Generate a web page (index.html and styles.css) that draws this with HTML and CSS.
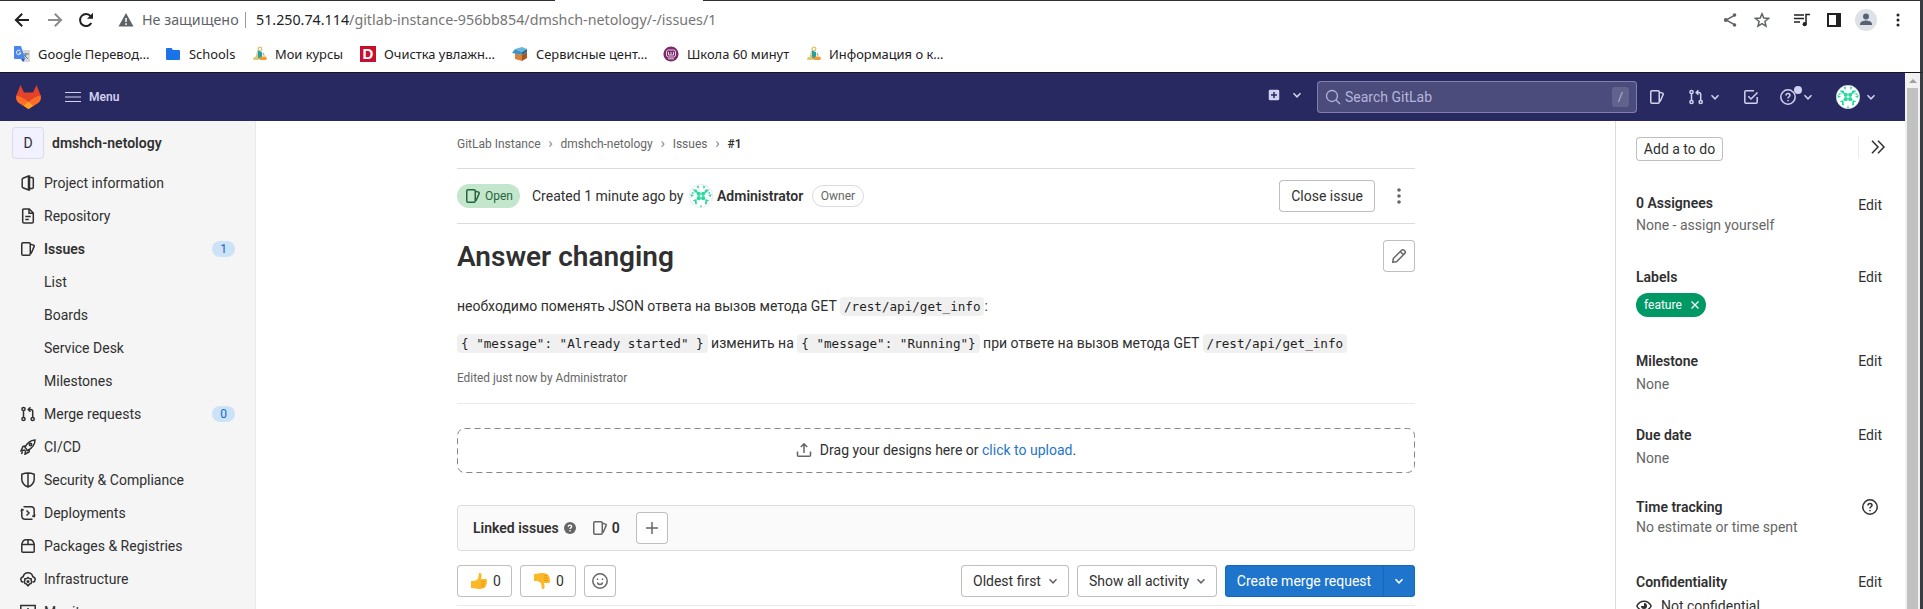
FILE: index.html
```html
<!DOCTYPE html>
<html lang="en">
<head>
<meta charset="utf-8">
<title>Answer changing (#1) · Issues</title>
<link rel="stylesheet" href="styles.css">
</head>
<body>
<svg class="sprite" aria-hidden="true">
  <symbol id="issues" viewBox="0 0 16 16"><rect x="1.75" y="1.75" width="8.5" height="12.5" rx="1.2"/><path d="M10.500 3.200l3 .9c.6.200.9.700.7 1.300l-3.200 7.400"/></symbol>
  <symbol id="merge" viewBox="0 0 16 16"><circle cx="3.5" cy="3" r="1.6"/><circle cx="3.5" cy="13" r="1.6"/><circle cx="12.7" cy="13" r="1.6"/><path d="M3.500 4.600v6.800M12.700 11.400V5.500c0-1.200-.8-2-2-2H8.500M10.400 1.300L8.200 3.500l2.200 2.200"/></symbol>
  <symbol id="chevron" viewBox="0 0 16 16"><path d="M4.500 6.200L8 9.800l3.500-3.600"/></symbol>
  <symbol id="question" viewBox="0 0 16 16"><circle cx="8" cy="8" r="7.2"/><path d="M6 6.500c0-1.200.9-2 2-2s2 .7 2 1.800c0 1.400-2 1.500-2 3.100"/><path d="M8 10.900v1.400"/></symbol>
  <symbol id="identicon" viewBox="0 0 24 24"><circle cx="12" cy="12" r="11.7" fill="#fff" stroke="#dcdcdc" stroke-width=".6"/><g fill="#2bd9a0" stroke="none"><circle cx="9.800" cy="9.800" r="2.100"/><circle cx="14.200" cy="9.800" r="2.100"/><circle cx="9.800" cy="14.200" r="2.100"/><circle cx="14.200" cy="14.200" r="2.100"/><path d="M3.500 5.500h4l1.500 3-2 .5zM20.500 5.500h-4l-1.500 3 2 .5zM3.500 16.500l4-1.500.5 5.500-2-.5V17.500zM20.500 16.500l-4-1.500-.5 5.500 2-.5V17.500zM7.500 2.500l2.500-1-.5 3.500zM16.500 2.500l-2.500-1 .5 3.500zM1.500 10l3.500 1.500-3 1.500zM22.500 10L19 11.500l3 1.500zM11 23l1-2.500 1 2.500zM3 8l3 1-3.500 1zM21 8l-3 1 3.500 1z"/></g></symbol>
  <symbol id="courses" viewBox="0 0 16 16"><circle cx="8" cy="3" r="1.800" fill="none" stroke="#d9c36b" stroke-width="1.300"/><path d="M5.500 4.500L10 6v7H6z" fill="#23a0a5"/><path d="M1 13.500c0-2 1-2.500 2.500-2.500L5 6l1.500 6v2H2z" fill="#e3c675"/><path d="M7 12l3-1.500h3.500c1.500 0 1.500 3 .5 3.500H8z" fill="#f29c2e"/><path d="M11 6l2 3.500h-2.500z" fill="#a8b58a"/></symbol>
</svg>

<div class="browser">
  <div class="tabstrip"><i></i><i></i></div>
  <div class="toolbar">
    <svg class="ico t-back" viewBox="0 0 16 16"><path d="M15 8H2M8.200 1.700L1.900 8l6.300 6.300"/></svg>
    <svg class="ico t-fwd" viewBox="0 0 16 16"><path d="M1 8h13M7.800 1.700L14.100 8l-6.300 6.300"/></svg>
    <svg class="ico t-load" viewBox="0 0 16 16"><path d="M13.300 11A6 6 0 1 1 12.700 4.200"/><path class="solid" d="M15 .8v6H9z"/></svg>
    <svg class="t-warn" viewBox="0 0 16 14"><path d="M8 0l7.500 13.500H.5z" fill="#5f6368"/><path d="M8 5v4M8 10.300v1.700" stroke="#fff" stroke-width="1.500"/></svg>
    <span class="unsafe">Не защищено</span><span class="bar"></span>
    <span class="url"><b>51.250.74.114</b>/gitlab-instance-956bb854/dmshch-netology/-/issues/1</span>
    <div class="tools">
      <svg class="ico" viewBox="0 0 16 16"><path d="M12.500 3.300L4 8l8.500 4.700"/><g class="solid"><circle cx="12.500" cy="3" r="1.800"/><circle cx="3.700" cy="8" r="1.900"/><circle cx="12.500" cy="13" r="1.800"/></g></svg>
      <svg class="ico" viewBox="0 0 16 16"><path d="M8 1.800l1.800 4.300 4.700.4-3.600 3 1.100 4.600L8 11.700l-4 2.400 1.100-4.600-3.600-3 4.700-.4z"/></svg>
      <svg class="ico dark" viewBox="0 0 16 16"><path d="M0 3h10M0 6.500h10M0 10h6M12 12V2.500h4"/><circle class="solid" cx="10.700" cy="12.200" r="2.100"/></svg>
      <svg class="dark panel" viewBox="0 0 14 14"><path d="M1 1h12v12H1z" fill="#fff" stroke="#222" stroke-width="2"/><path d="M9 1h4v12H9z" fill="#222"/></svg>
      <svg class="person" viewBox="0 0 22 22"><circle cx="11" cy="11" r="11" fill="#dee1e6"/><circle cx="11" cy="7.500" r="3" fill="#566176"/><path d="M5 16v-1c0-2.500 4-3.500 6-3.500s6 1 6 3.500v1z" fill="#566176"/></svg>
      <svg class="kebab" viewBox="0 0 16 16"><circle cx="8" cy="3" r="1.500"/><circle cx="8" cy="8" r="1.500"/><circle cx="8" cy="13" r="1.500"/></svg>
    </div>
  </div>
  <div class="bookmarks">
    <span><svg viewBox="0 0 16 16"><path d="M7 4h9v12H9z" fill="#d8d8d8"/><path d="M9 8h6M12 7v1c0 3-2 4-3 5M10 9l4 4" stroke="#607d8b" fill="none"/><path d="M0 1a1 1 0 0 1 1-1h6l4 13H1a1 1 0 0 1-1-1z" fill="#4a86ee"/><path d="M7 13h4l-2 3z" fill="#2a56c6"/><path d="M6.500 5.200A2.200 2.200 0 1 0 6.800 7H4.800" stroke="#fff" fill="none"/></svg>Google Перевод…</span>
    <span><svg viewBox="0 0 16 16"><path d="M0 3a1 1 0 0 1 1-1h4.500L7 4h6a1 1 0 0 1 1 1v8a1 1 0 0 1-1 1H1a1 1 0 0 1-1-1z" fill="#1a73e8"/></svg>Schools</span>
    <span><svg viewBox="0 0 16 16"><use href="#courses"/></svg>Мои курсы</span>
    <span><i class="d-logo">D</i>Очистка увлажн…</span>
    <span><svg viewBox="0 0 16 16"><path d="M3 7l7 2v6l-7-2z" fill="#d9803b"/><path d="M10 9l5-3v6l-5 3z" fill="#a9561d"/><path d="M3 3l7-2 5 2-5 3z" fill="#67b6dd"/><path d="M3 3l7 3v3L0 7z" fill="#3c94c6"/><path d="M10 6l5-3v3l-5 3z" fill="#25698f"/></svg>Сервисные цент…</span>
    <span><svg viewBox="0 0 16 16"><circle cx="8" cy="8" r="7.600" fill="#7d2a6a"/><rect x="3.500" y="4" width="9" height="7" rx="2" fill="none" stroke="#e6cfe1"/><path d="M5.500 6v3h5V6M8 6v3M5 12.800h6" fill="none" stroke="#e6cfe1"/></svg>Школа 60 минут</span>
    <span><svg viewBox="0 0 16 16"><use href="#courses"/></svg>Информация о к…</span>
  </div>
</div>

<div class="viewport">
  <div class="app">
    <header class="navbar">
      <svg class="logo" viewBox="0 0 25 24"><path d="M4.500 0L8 7.500h9L20.500 0l4.200 10.500c.6 3.500-.7 6-2.700 7.500L12.500 24 3 18C1 16.500-.3 14 .3 10.500z" fill="#e24329"/><path d="M.3 10.500c3 .3 7.200 2.500 12.200 6.300 5-3.800 9.200-6 12.200-6.300.6 3.500-.7 6-2.700 7.500L12.500 24 3 18C1 16.500-.3 14 .3 10.500z" fill="#fc6d26"/><path d="M12.500 16.800l4.600 3.900-4.600 3.300-4.600-3.300z" fill="#fca326"/></svg>
      <svg class="burger" viewBox="0 0 16 12"><path d="M0 1.500h16M0 6h16M0 10.500h16"/></svg>
      <b class="menu">Menu</b>
      <div class="nav-right">
        <svg class="plus" viewBox="0 0 12 12"><rect width="12" height="12" rx="2"/><path d="M6 3v6M3 6h6"/></svg>
        <svg class="ico chev1"><use href="#chevron"/></svg>
        <div class="search"><svg class="ico" viewBox="0 0 16 16"><circle cx="7" cy="7" r="5.500"/><path d="M11 11l4 4"/></svg><span>Search GitLab</span><kbd>/</kbd></div>
        <svg class="ico n-issues"><use href="#issues"/></svg>
        <svg class="ico n-merge"><use href="#merge"/></svg>
        <svg class="ico n-ch"><use href="#chevron"/></svg>
        <svg class="ico n-todo" viewBox="0 0 16 16"><path d="M14.200 8v5c0 .7-.5 1.200-1.200 1.200H3c-.7 0-1.200-.5-1.200-1.200V3c0-.7.5-1.200 1.200-1.200h8M5.300 7.300L8 10l6.500-6.500"/></svg>
        <span class="n-help"><svg class="ico"><use href="#question"/></svg><i></i></span>
        <svg class="ico n-ch2"><use href="#chevron"/></svg>
        <svg class="avatar n-av"><use href="#identicon"/></svg>
        <svg class="ico n-ch3"><use href="#chevron"/></svg>
      </div>
    </header>
    <div class="columns">
      <nav class="side">
        <div class="project"><span class="letter">D</span><b>dmshch-netology</b></div>
        <a><svg class="ico" viewBox="0 0 16 16"><path d="M8.500 1.200v13.600M8.500 1L3 3.300c-.5.200-.8.500-.8 1v7.400c0 .5.300.8.8 1L8.500 15h1V1zM9.500 2.500H12c.8 0 1.300.4 1.300 1.200v8.600c0 .8-.5 1.200-1.300 1.200H9.500"/></svg>Project information</a>
        <a><svg class="ico" viewBox="0 0 16 16"><path d="M3.700.9h5.600L13.300 5v8.800c0 .8-.5 1.300-1.300 1.300H4c-.8 0-1.300-.5-1.300-1.300V2.200C2.700 1.400 3 .9 3.700.9zM9 1v4.300h4.200M5.300 8.500h5.400M5.300 11.500h3.500"/></svg>Repository</a>
        <a class="active"><svg class="ico"><use href="#issues"/></svg>Issues<em>1</em></a>
        <a class="sub">List</a>
        <a class="sub">Boards</a>
        <a class="sub">Service Desk</a>
        <a class="sub">Milestones</a>
        <a><svg class="ico"><use href="#merge"/></svg>Merge requests<em>0</em></a>
        <a><svg class="ico" viewBox="0 0 16 16"><path d="M5 8.500C7 4 10 1.300 15 1c0 4.500-2.500 8-7.500 10.500zM6 6.800L3 7.500l-2 4.300 4-.8M9.500 10.200L9 13l-4 2.200.7-4M2.500 12.500L1.500 15"/><circle cx="10.500" cy="5.500" r="1.200"/></svg>CI/CD</a>
        <a><svg class="ico" viewBox="0 0 16 16"><path d="M8 1c-2 0-4 .4-6.200 1.200v5c0 3.500 2 6 6.200 7.800 4.200-1.800 6.200-4.300 6.200-7.800v-5C12 1.400 10 1 8 1zM8 1v14"/></svg>Security &amp; Compliance</a>
        <a><svg class="ico" viewBox="0 0 16 16"><path d="M3.500 1.800H11c2 0 3.200 1.200 3.200 3.200v6.500M12.500 14.200H5c-2 0-3.200-1.200-3.200-3.200V4.500M1 6.500l.8-2 2 .5M15 9.500l-.8 2-2-.5M6.500 5.500L9 8l-2.500 2.500"/></svg>Deployments</a>
        <a><svg class="ico" viewBox="0 0 16 16"><path d="M1.800 6.500v6.700c0 .6.400 1 1 1h10.400c.6 0 1-.4 1-1V6.500zM1.800 6.500c.6-3 2-4.700 4.200-4.700h4c2.200 0 3.600 1.700 4.200 4.700M8 2v4.500"/></svg>Packages &amp; Registries</a>
        <a><svg class="ico" viewBox="0 0 16 16"><path d="M3 11.200C1.700 10.800.8 9.800.8 8.500c0-1.500 1-2.500 2.400-2.800C3.700 3.300 5.500 1.700 8 1.700s4.300 1.600 4.800 4c1.400.3 2.400 1.300 2.400 2.800 0 1.300-.9 2.300-2.200 2.700M8 6.500l1.300 1 1.800.2.100 1.900.7 1.400-1 1.500-1.300.4L8 14.800l-1.600-1.900-1.300-.4-1-1.500.7-1.400.1-1.900 1.800-.2z"/><circle cx="8" cy="10.500" r=".8"/></svg>Infrastructure</a>
        <a><svg class="ico" viewBox="0 0 16 16"><path d="M.8 1.500h14.400v10H.8zM5 15h6M8 4v4"/></svg>Monitor</a>
      </nav>
      <main>
        <div class="crumbs">GitLab Instance<i>›</i>dmshch-netology<i>›</i>Issues<i>›</i><b>#1</b></div>
        <div class="status">
          <span class="open"><svg class="ico"><use href="#issues"/></svg>Open</span>
          <span class="created">Created 1 minute ago by</span>
          <svg class="avatar"><use href="#identicon"/></svg>
          <b>Administrator</b><span class="owner">Owner</span>
          <button class="close">Close issue</button>
          <svg class="kebab" viewBox="0 0 16 16"><circle cx="8" cy="2" r="1.800"/><circle cx="8" cy="8" r="1.800"/><circle cx="8" cy="14" r="1.800"/></svg>
        </div>
        <div class="title"><h1>Answer changing</h1><button class="sq"><svg class="ico" viewBox="0 0 16 16"><path d="M1.800 14.200l.5-3.700 8.300-8.300c.7-.7 1.700-.7 2.400 0l.8.8c.7.7.7 1.700 0 2.400l-8.300 8.300zM9.300 3.500l3.200 3.200"/></svg></button></div>
        <p>необходимо поменять JSON ответа на вызов метода GET <code>/rest/api/get_info</code>:</p>
        <p><code>{ "message": "Already started" }</code> изменить на <code>{ "message": "Running"}</code> при ответе на вызов метода GET <code>/rest/api/get_info</code></p>
        <div class="edited">Edited just now by Administrator</div>
        <div class="drop">
          <svg class="dash"><rect x=".5" y=".5" width="957" height="44" rx="7"/></svg>
          <svg class="ico" viewBox="0 0 16 16"><path d="M1.500 9.500v3.700c0 .6.400 1 1 1h11c.6 0 1-.4 1-1V9.500M8 11V2M4.800 5L8 1.800 11.200 5"/></svg><span>Drag your designs here or <a>click to upload</a>.</span>
        </div>
        <div class="linked"><b>Linked issues</b><svg class="help" viewBox="0 0 12 12"><circle cx="6" cy="6" r="6" fill="#666"/><path d="M4.300 4.800c0-1 .7-1.700 1.700-1.700s1.700.6 1.700 1.400C7.700 5.600 6 5.700 6 7M6 8v1.400" fill="none" stroke="#fff" stroke-width="1.300"/></svg><svg class="ico"><use href="#issues"/></svg><b>0</b><button class="sq"><svg class="ico" viewBox="0 0 16 16"><path d="M8 2v12M2 8h12"/></svg></button></div>
        <div class="actions">
          <button class="up"><svg viewBox="0 0 18 18"><path d="M8 7l1-6c2-.5 3 1 2.500 3L11 7h4.500c1.800 0 2 2 1 2.500 1 .7.700 2-.300 2.400.6.900.1 2-.9 2.200.3 1.200-.5 1.900-1.500 1.900C11 17.500 7 17 5.500 16.500L1 16V9h3.500z" fill="#fcb826"/><path d="M11 9.500h4M11 12h4M11 14.300h3" stroke="#e08a12" stroke-width=".7"/></svg>0</button>
          <button class="down"><svg viewBox="0 0 18 18"><g transform="matrix(1 0 0 -1 0 18)"><path d="M10 7L9 1C7 .5 6 2 6.500 4L7 7H2.500c-1.800 0-2 2-1 2.500-1 .7-.7 2 .3 2.400-.6.900-.1 2 .9 2.200-.3 1.200.5 1.900 1.500 1.900 2.800 1.500 6.800 1 8.300.5L17 16V9h-3.500z" transform="matrix(-1 0 0 1 18 0)" fill="#fcb826"/><path d="M11 9.500h4M11 12h4M11 14.300h3" stroke="#e08a12" stroke-width=".7"/></g></svg>0</button>
          <button class="sq"><svg class="ico" viewBox="0 0 16 16"><circle cx="8" cy="8" r="7.200"/><path d="M5.500 5.500v1.500M10.500 5.500v1.500M5.300 9.500c.5 1.500 1.500 2 2.700 2s2.200-.5 2.700-2"/></svg></button>
          <button class="sort">Oldest first<svg class="ico"><use href="#chevron"/></svg></button>
          <button class="show">Show all activity<svg class="ico"><use href="#chevron"/></svg></button>
          <div class="create"><span>Create merge request</span><i><svg class="ico"><use href="#chevron"/></svg></i></div>
        </div>
      </main>
      <aside>
        <div class="todo"><button>Add a to do</button><span><svg class="ico" viewBox="0 0 16 16"><path d="M2 1.800L8 8l-6 6.200M8 1.800L14 8l-6 6.200"/></svg></span></div>
        <section class="s1"><b>0 Assignees</b><a>Edit</a><p>None - assign yourself</p></section>
        <section class="s2"><b>Labels</b><a>Edit</a><p><span class="label">feature<svg viewBox="0 0 8 8"><path d="M.5.5l7 7M7.500.5l-7 7"/></svg></span></p></section>
        <section class="s3"><b>Milestone</b><a>Edit</a><p>None</p></section>
        <section class="s4"><b>Due date</b><a>Edit</a><p>None</p></section>
        <section class="s5"><b>Time tracking</b><a class="q"><svg class="ico"><use href="#question"/></svg></a><p>No estimate or time spent</p></section>
        <section class="s6"><b>Confidentiality</b><a>Edit</a><p><svg class="ico" viewBox="0 0 16 16"><path d="M.8 8C2.500 5 5 3.300 8 3.300S13.500 5 15.200 8C13.500 11 11 12.700 8 12.700S2.500 11 .8 8z"/><path class="solid" d="M8 5a3 3 0 1 1-3 3h3z"/></svg>Not confidential</p></section>
      </aside>
    </div>
  </div>
  <div class="scroll"><i></i><b></b></div>
  <div class="edge"></div>
</div>
</body>
</html>
```
FILE: styles.css
```css
* { box-sizing: border-box; }
body { margin: 0; width: 1923px; height: 609px; overflow: hidden; background: #fff; color: #303030; font: 14px/20px Roboto, sans-serif; display: flex; flex-direction: column; }
svg { display: block; flex: none; }
b { font-weight: 600; }
i, em { font-style: normal; }
.sprite { display: none; }
.ico { width: 16px; height: 16px; fill: none; stroke: currentColor; stroke-width: 1.5; }
.solid { fill: currentColor; stroke: none; }
button { font: inherit; color: inherit; background: #fff; border: 0; box-shadow: inset 0 0 0 1px #bfbfbf; border-radius: 4px; height: 32px; padding: 0 12px; display: flex; align-items: center; }
button.sq { width: 32px; padding: 0 8px; color: #666; }
button .ico { color: #666; }

/* browser chrome */
.browser { height: 73px; flex: none; border-bottom: 1px solid #15151f; border-right: 3px solid #3a3d41; font-family: "Noto Sans", sans-serif; }
.tabstrip { height: 1px; display: flex; justify-content: space-between; }
.tabstrip i { background: #303134; width: 555px; }
.tabstrip i + i { width: 1217px; }
.toolbar { height: 38px; display: flex; align-items: center; padding-left: 14px; font-size: 14.27px; color: #757575; }
.t-back, .t-load { color: #222; stroke-width: 2; }
.t-fwd { color: #8c8c8c; stroke-width: 2; margin-left: 17px; }
.t-load { margin-left: 15px; }
.t-warn { width: 16px; height: 14px; margin-left: 24px; }
.unsafe { margin-left: 8px; width: 103px; color: #5f6368; white-space: nowrap; }
.bar { width: 1px; height: 16px; background: #9a9a9a; margin-right: 10px; }
.url b { font-weight: 400; color: #222; }
.tools { margin-left: auto; display: flex; align-items: center; color: #5f6368; padding-right: 14px; }
.tools svg + svg { margin-left: 16px; }
.tools svg.dark { color: #222; margin-left: 24px; }
.tools svg.panel { width: 14px; height: 14px; margin-left: 17px; }
.tools svg.person { width: 22px; height: 22px; margin-left: 14px; }
.tools svg.kebab { width: 16px; height: 16px; fill: #222; margin-left: 13px; }
.bookmarks { height: 30px; display: grid; grid-template-columns: 152px 86px 108px 152px 151px 143px 200px; padding-left: 14px; font-size: 12.9px; color: #222; }
.bookmarks span { display: flex; align-items: center; gap: 8px; white-space: nowrap; }
.bookmarks svg { width: 16px; height: 16px; }
.bookmarks span:nth-child(2), .bookmarks span:nth-child(3), .bookmarks span:nth-child(7) { gap: 7px; }
.d-logo { width: 16px; height: 16px; background: #c8102e; color: #fff; font: 700 15px/16px "Liberation Sans", sans-serif; text-align: center; }

.viewport { display: flex; height: 536px; }
.app { width: 1905px; height: 536px; overflow: hidden; }
.scroll { width: 15px; background: #f1f1f1; display: flex; flex-direction: column; align-items: center; }
.scroll i { border: 4px solid transparent; border-top: 0; border-bottom: 4px solid #a0a0a0; margin: 6px 0 5px; }
.scroll b { width: 11px; flex: 1; background: #c1c1c1; }
.edge { width: 3px; background: #3a3d41; }

/* top navigation */
.navbar { height: 48px; background: #292961; color: #d1d1f0; display: flex; align-items: center; padding-left: 16px; }
.logo { width: 25px; height: 24px; }
.burger { width: 16px; height: 12px; margin-left: 24px; stroke: #d1d1f0; stroke-width: 1.2; }
.menu { margin-left: 8px; font-size: 12px; }
.nav-right { margin-left: auto; display: flex; align-items: center; padding-right: 26px; }
.plus { width: 12px; height: 12px; fill: #d1d1f0; stroke: #292961; stroke-width: 1.5; margin-bottom: 4px; }
.chev1 { margin: 0 12px 4px 9px; }
.search { width: 320px; height: 32px; border-radius: 4px; background: #4b4b7c; box-shadow: inset 0 0 0 1px #8080a8; display: flex; align-items: center; padding: 0 8px; color: #b5b5d9; }
.search .ico { stroke-width: 1.3; }
.search span { margin-left: 4px; }
.search kbd { margin-left: auto; width: 17px; height: 20px; border-radius: 3px; background: #62628f; font: 13px/20px Roboto, sans-serif; text-align: center; }
.n-issues { margin-left: 12px; }
.n-merge { margin-left: 23px; }
.n-ch { margin-left: 3px; }
.n-todo { margin-left: 20px; }
.n-help { margin-left: 21px; position: relative; }
.n-help i { position: absolute; left: 14px; top: -3px; width: 8px; height: 8px; border-radius: 50%; background: #d1d1f0; }
.n-ch2 { margin-left: 4px; }
.avatar { width: 24px; height: 24px; }
.n-av { margin-left: 20px; }
.n-ch3 { margin-left: 3px; }

.columns { display: flex; height: 488px; }

/* project sidebar */
.side { width: 256px; flex: none; background: #f5f5f5; border-right: 1px solid #e9e9e9; overflow: hidden; }
.project { display: flex; align-items: center; gap: 8px; padding: 6px 12px 7px; height: 45px; }
.letter { width: 32px; height: 32px; border-radius: 4px; background: #f1f1ff; box-shadow: inset 0 0 0 1px #dcdcec; text-align: center; line-height: 32px; }
.side a { height: 33px; display: flex; align-items: center; padding: 0 20px; gap: 8px; white-space: nowrap; }
.side a.sub { padding-left: 44px; }
.side a.active { font-weight: 600; }
.side em { margin-left: auto; width: 23px; height: 16px; border-radius: 8px; background: #cbe2f9; color: #1068bf; font: 12px/16px Roboto, sans-serif; text-align: center; }

/* issue */
main { width: 958px; margin-left: 201px; flex: none; }
.crumbs { height: 48px; border-bottom: 1px solid #dbdbdb; font-size: 12px; line-height: 46px; color: #666; }
.crumbs i { display: inline-block; width: 20px; text-align: center; font-size: 15px; color: #888; line-height: 16px; }
.crumbs b { color: #303030; }
.status { height: 55px; border-bottom: 1px solid #dbdbdb; display: flex; align-items: center; }
.open { width: 63px; height: 24px; border-radius: 12px; background: #c3e6cd; color: #24663b; font-size: 12px; display: flex; align-items: center; padding-left: 8px; gap: 4px; }
.created { margin: 0 6px 0 12px; width: 151px; white-space: nowrap; }
.status b { margin-left: 4px; width: 95px; }
.owner { width: 52px; height: 22px; border: 1px solid #dbdbdb; border-radius: 11px; color: #666; font-size: 12px; line-height: 20px; text-align: center; }
.close { margin-left: auto; width: 96px; justify-content: center; padding: 0; white-space: nowrap; }
.status .kebab { width: 16px; height: 16px; fill: #666; margin: 0 8px 0 16px; }
.title { height: 64px; display: flex; justify-content: space-between; align-items: center; }
h1 { margin: 0; padding-top: 2px; font-size: 28px; line-height: 36px; font-weight: 600; }
main p { margin: 0; line-height: 20px; white-space: nowrap; padding: 8px 0 9px; height: 37px; }
code { font: 12.6px/19px "DejaVu Sans Mono", monospace; background: #f0f0f0; color: #1f1f1f; border-radius: 4px; padding: 2px 4px; }
.edited { height: 42px; border-bottom: 1px solid #eaeaea; font-size: 11.85px; line-height: 16px; padding-top: 8px; color: #666; }
.drop { position: relative; height: 45px; margin-top: 24px; display: flex; align-items: center; justify-content: center; gap: 8px; padding-bottom: 1px; }
.drop .ico { color: #666; }
.drop a { color: #1f75cb; }
.dash { position: absolute; left: 0; top: 0; width: 958px; height: 45px; fill: none; stroke: #868686; stroke-dasharray: 6 4; }
.linked { height: 46px; margin-top: 32px; background: #fafafa; border: 1px solid #dbdbdb; border-radius: 4px; display: flex; align-items: center; padding-left: 15px; }
.linked .help { width: 12px; height: 12px; margin-left: 5px; }
.linked > .ico { color: #666; margin: 0 4px 0 16px; }
.linked button { margin-left: 16px; }
.actions { height: 55px; display: flex; align-items: flex-start; padding-top: 14px; border-bottom: 1px solid #eaeaea; white-space: nowrap; }
.actions .up, .actions .down { width: 55px; margin-right: 8px; gap: 5px; padding-left: 13px; }
.actions .down { width: 56px; }
.actions .up svg, .actions .down svg { width: 18px; height: 18px; }
.sort { width: 108px; margin-left: auto; margin-right: 8px; }
.show { width: 140px; margin-right: 8px; }
.sort, .show { justify-content: space-between; padding: 0 8px 0 12px; }
.create { width: 190px; height: 32px; border-radius: 4px; background: #1f75cb; box-shadow: inset 0 0 0 1px #1068bf; color: #fff; display: flex; line-height: 32px; }
.create span { width: 158px; text-align: center; }
.create i { width: 32px; border-left: 1px solid #1068bf; padding: 8px 7px; }

/* issue details */
aside { width: 290px; margin-left: 200px; flex: none; border-left: 1px solid #dbdbdb; padding: 16px 23px 0 20px; display: flex; flex-direction: column; }
.todo { height: 56px; display: flex; justify-content: space-between; white-space: nowrap; flex: none; }
.todo button { width: 87px; height: 24px; padding: 0; justify-content: center; }
.todo span { width: 24px; height: 21px; border-left: 1px solid #eaeaea; padding: 2px 0 0 11px; }
aside section { display: grid; grid-template-columns: 1fr auto; align-content: start; flex: none; white-space: nowrap; }
aside section p { grid-column: 1 / 3; margin: 2px 0 0; color: #666; }
.s1 { height: 74px; }
.s1 a { padding-top: 2px; }
aside .s1 p { margin-top: 0; }
.s2 { height: 84px; }
aside .s2 p { margin-top: 6px; }
.s3 { height: 74px; }
aside .s3 p, aside .s4 p { margin-top: 3px; }
.s4 { height: 72px; }
.s5 { height: 75px; }
aside .s5 p { margin-top: 0; }
.s5 .q { padding: 2px 4px 0 0; }
aside .s6 p { margin-top: 4px; color: #303030; display: flex; align-items: center; gap: 9px; }
.label { width: 70px; height: 24px; border-radius: 12px; background: #009966; color: #fff; font-size: 12px; display: flex; align-items: center; padding-left: 8px; gap: 9px; }
.label svg { width: 8px; height: 8px; stroke: #fff; stroke-width: 1.3; }
```
